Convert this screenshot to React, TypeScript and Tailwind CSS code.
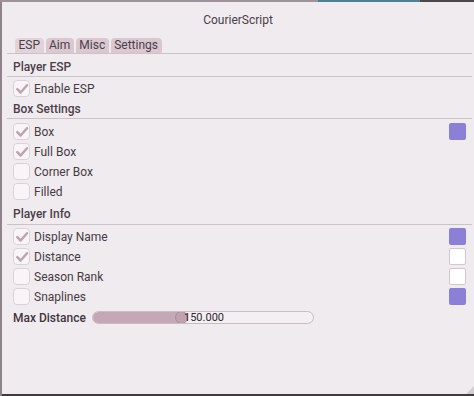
import { useState } from 'react';

const font = { fontFamily: 'Roboto, "Noto Sans", sans-serif' };

function Check({ label, checked }: { label: string; checked: boolean }) {
  return (
    <div className="flex items-center gap-[4px] h-[17px]">
      <span className="w-[17px] h-[17px] rounded-[4px] border-[1.5px] border-[#ddd1d8] bg-[#f8f4f7] flex items-center justify-center">
        {checked && (
          <svg width="14" height="14" viewBox="0 0 14 14">
            <path d="M2.3 7.2 L5.6 10.5 L12 3.2" fill="none" stroke="#bba5b1" strokeWidth="2.5" strokeLinecap="round" strokeLinejoin="round" />
          </svg>
        )}
      </span>
      <span className="text-[12px] leading-[14px] text-[#463b44]">{label}</span>
    </div>
  );
}

function Row({ label, checked, swatch }: { label: string; checked: boolean; swatch?: 'purple' | 'white' }) {
  return (
    <div className="flex items-center justify-between">
      <Check label={label} checked={checked} />
      {swatch === 'purple' && <span className="w-[17px] h-[17px] rounded-[2px] bg-[#8b80d6]" />}
      {swatch === 'white' && <span className="w-[17px] h-[17px] rounded-[2px] bg-white border border-[#d3c7ce]" />}
    </div>
  );
}

function Header({ title, pt }: { title: string; pt: string }) {
  return (
    <div className={`${pt} pb-[1px] text-[12px] leading-[14px] font-medium text-[#4b4049] px-[6px]`}>{title}</div>
  );
}

export default function App() {
  const [tab, setTab] = useState('ESP');
  const tabs = ['ESP', 'Aim', 'Misc', 'Settings'];
  const dist = 150;

  return (
    <div className="w-[474px] h-[396px] flex flex-col bg-[#3f3a3d] overflow-hidden" style={font}>
      <div className="flex h-[2px] shrink-0">
        <div className="w-[318px] bg-[#a0929a]" />
        <div className="w-[102px] bg-[#4e8190]" />
        <div className="flex-1 bg-[#4a4849]" />
      </div>
      <div className="flex flex-1 min-h-0">
        <div className="w-[2px] bg-[#8f8389]" />
        <div className="relative flex-1 mb-[2px] bg-[#f0ebef] flex flex-col">
          <div className="pt-[10px] h-[27px] text-center text-[12px] leading-[16px] text-[#4b4049]">CourierScript</div>
          <div className="pl-[5px] pr-[2px] mt-[9px]">
            <div className="flex gap-[2px] pl-[8px]">
              {tabs.map((t) => (
                <button
                  key={t}
                  onClick={() => setTab(t)}
                  className={`h-[15px] px-[3.5px] rounded-t-[4px] text-[12px] leading-[15px] text-[#4b4049] ${
                    tab === t ? 'bg-[#e2d3da]' : 'bg-[#dac7d0]'
                  }`}
                >
                  {t}
                </button>
              ))}
            </div>
            <div className="h-px bg-[#cdc2c8]" />

            <Header title="Player ESP" pt="pt-[6px] h-[22px]" />
            <div className="h-px bg-[#cdc2c8]" />
            <div className="px-[6px] mt-[3px]">
              <Check label="Enable ESP" checked />
            </div>

            <Header title="Box Settings" pt="pt-[5px] h-[21px]" />
            <div className="h-px bg-[#cdc2c8]" />
            <div className="px-[6px] mt-[4px] pr-[6px] flex flex-col gap-[3px]">
              <Row label="Box" checked swatch="purple" />
              <Row label="Full Box" checked />
              <Row label="Corner Box" checked={false} />
              <Row label="Filled" checked={false} />
            </div>

            <Header title="Player Info" pt="pt-[7px] h-[24px]" />
            <div className="h-px bg-[#cdc2c8]" />
            <div className="px-[6px] mt-[3px] flex flex-col gap-[3px]">
              <Row label="Display Name" checked swatch="purple" />
              <Row label="Distance" checked swatch="white" />
              <Row label="Season Rank" checked={false} swatch="white" />
              <Row label="Snaplines" checked={false} swatch="purple" />
            </div>

            <div className="px-[6px] mt-[6px] flex items-center h-[13px]">
              <span className="w-[79px] text-[12px] leading-[14px] font-medium text-[#3f353d]">Max Distance</span>
              <div className="relative w-[222px] h-[13px] rounded-full border border-[#c9bcc3] bg-[#f3eff2] overflow-hidden">
                <div className="absolute left-0 top-0 bottom-0 bg-[#c4a8b5]" style={{ width: `${(dist / 360) * 100}%` }} />
                <span className="absolute left-[82px] top-[-1px] w-[13px] h-[13px] rounded-full bg-[#c0a2b0] border border-[#a98b98]" />
                <span className="absolute left-[91px] top-0 text-[11px] leading-[11px] text-[#2f282d]">150.000</span>
              </div>
            </div>
          </div>
          <svg className="absolute right-0 bottom-0" width="8" height="8" viewBox="0 0 8 8">
            <path d="M8 0 L8 8 L0 8 Z" fill="#d6cdd2" />
          </svg>
        </div>
      </div>
    </div>
  );
}
